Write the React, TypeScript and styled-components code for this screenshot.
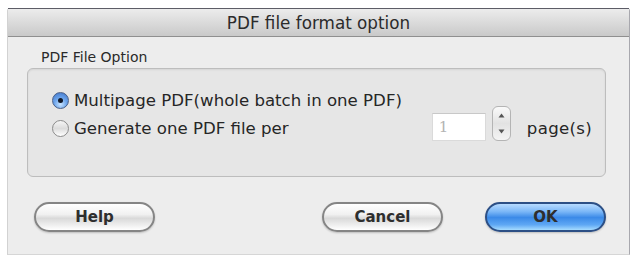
import React from "react";
import styled, { createGlobalStyle } from "styled-components";

const GlobalStyle = createGlobalStyle`
  html, body { margin: 0; padding: 0; background: #ffffff; }
  body { font-family: "DejaVu Sans", "Liberation Sans", sans-serif; }
`;

const Page = styled.div`
  width: 635px;
  height: 259px;
  padding: 8px 0 0 7px;
  box-sizing: border-box;
  background: #ffffff;
`;

const Window = styled.div`
  width: 623px;
  height: 247px;
  box-sizing: border-box;
  display: flex;
  flex-direction: column;
  background: #ededed;
  border-left: 1px solid #d2d2d2;
  border-right: 1px solid #a8a8ae;
  border-bottom: 1px solid #d6d6d6;
  border-top-left-radius: 3px;
  border-top-right-radius: 3px;
`;

const TitleBar = styled.div`
  height: 29px;
  flex: none;
  display: flex;
  align-items: center;
  justify-content: center;
  background: linear-gradient(#ececec, #d9d9d9 55%, #c9c9c9);
  border-bottom: 1px solid #8f8f8f;
  border-top: 1px solid #5c5c66;
  box-sizing: border-box;
  font-size: 16.8px;
  color: #2b2b2b;
  padding-top: 1px;
`;

const Body = styled.div`
  flex: 1;
  display: flex;
  flex-direction: column;
  padding: 10px 23px 0 19px;
`;

const GroupLabel = styled.div`
  font-size: 14px;
  color: #2a2a2a;
  margin-left: 14px;
  height: 21px;
  line-height: 21px;
`;

const GroupBox = styled.div`
  height: 109px;
  box-sizing: border-box;
  border: 1px solid #bdbdbd;
  border-radius: 6px;
  background: #e6e6e6;
  box-shadow: inset 0 1px 2px rgba(0,0,0,0.08);
  display: flex;
  flex-direction: column;
  padding: 17px 13px 0 24px;
`;

const OptionRow = styled.div`
  display: flex;
  align-items: center;
  justify-content: space-between;
  height: 28px;
`;

const RadioLabel = styled.label`
  display: flex;
  align-items: center;
  gap: 5px;
  font-size: 16.6px;
  color: #262626;
  white-space: nowrap;
`;

const Radio = styled.span<{ $checked?: boolean }>`
  width: 17px;
  height: 17px;
  border-radius: 50%;
  box-sizing: border-box;
  display: inline-flex;
  align-items: center;
  justify-content: center;
  border: 1px solid ${(p) => (p.$checked ? "#4a5f86" : "#8c8c8c")};
  background: ${(p) =>
    p.$checked
      ? "radial-gradient(circle at 50% 75%, #c8e4ff 0%, #6ea6ec 45%, #3d72c8 100%)"
      : "linear-gradient(#f6f6f6, #dcdcdc 50%, #ffffff)"};
  &::after {
    content: "";
    display: ${(p) => (p.$checked ? "block" : "none")};
    width: 5px;
    height: 5px;
    border-radius: 50%;
    background: #101828;
  }
`;

const PageGroup = styled.div`
  display: flex;
  align-items: flex-end;
  margin-bottom: 9px;
`;

const NumberField = styled.div`
  width: 54px;
  height: 28px;
  box-sizing: border-box;
  background: #ffffff;
  border: 1px solid #dadada;
  border-top-color: #c8c8c8;
  font-family: "DejaVu Serif", "Liberation Serif", serif;
  font-size: 15px;
  color: #b4b4b4;
  padding-left: 6px;
  line-height: 26px;
`;

const Stepper = styled.div`
  width: 19px;
  height: 35px;
  margin-left: 6px;
  box-sizing: border-box;
  border: 1px solid #b4b4b4;
  border-radius: 6px;
  background: linear-gradient(#fafafa, #e2e2e2 50%, #f4f4f4);
  display: flex;
  flex-direction: column;
  align-items: center;
  justify-content: space-between;
  padding: 6px 0 6px;
`;

const PagesText = styled.span`
  margin-left: 16px;
  margin-bottom: 2px;
  font-size: 16.6px;
  letter-spacing: 0.3px;
  line-height: 20px;
  color: #262626;
`;

const ButtonRow = styled.div`
  display: flex;
  align-items: center;
  margin-top: 25px;
  padding-left: 7px;
`;

const PillButton = styled.button<{ $primary?: boolean }>`
  width: 121px;
  height: 30px;
  border-radius: 15px;
  box-sizing: border-box;
  font-family: "DejaVu Sans", "Liberation Sans", sans-serif;
  font-weight: bold;
  font-size: 15px;
  color: #2e2e2e;
  padding: 0;
  border: 2px solid ${(p) => (p.$primary ? "#2c4f85" : "#858585")};
  background: ${(p) =>
    p.$primary
      ? "linear-gradient(#b7dbff 0%, #79b6f7 30%, #3b8ae8 52%, #5fa8f4 80%, #a6dcff 100%)"
      : "linear-gradient(#ffffff 0%, #f1f1f1 40%, #d9d9d9 55%, #f2f2f2 85%, #ffffff 100%)"};
  box-shadow: 0 1px 2px rgba(0,0,0,0.2);
`;

const Spacer = styled.div<{ $w?: number }>`
  flex: ${(p) => (p.$w ? "none" : "1")};
  width: ${(p) => (p.$w ? `${p.$w}px` : "auto")};
`;

const Arrow = ({ up }: { up?: boolean }) => (
  <svg width="7" height="5" viewBox="0 0 7 5">
    <path d={up ? "M0.5 4.5 L3.5 0.5 L6.5 4.5 Z" : "M0.5 0.5 L3.5 4.5 L6.5 0.5 Z"} fill="#555" />
  </svg>
);

export default function App() {
  return (
    <>
      <GlobalStyle />
      <Page>
        <Window>
          <TitleBar>PDF file format option</TitleBar>
          <Body>
            <GroupLabel>PDF File Option</GroupLabel>
            <GroupBox>
              <OptionRow>
                <RadioLabel>
                  <Radio $checked />
                  Multipage PDF(whole batch in one PDF)
                </RadioLabel>
              </OptionRow>
              <OptionRow>
                <RadioLabel>
                  <Radio />
                  Generate one PDF file per
                </RadioLabel>
                <PageGroup>
                  <NumberField>1</NumberField>
                  <Stepper>
                    <Arrow up />
                    <Arrow />
                  </Stepper>
                  <PagesText>page(s)</PagesText>
                </PageGroup>
              </OptionRow>
            </GroupBox>
            <ButtonRow>
              <PillButton>Help</PillButton>
              <Spacer />
              <PillButton>Cancel</PillButton>
              <Spacer $w={42} />
              <PillButton $primary>OK</PillButton>
            </ButtonRow>
          </Body>
        </Window>
      </Page>
    </>
  );
}
